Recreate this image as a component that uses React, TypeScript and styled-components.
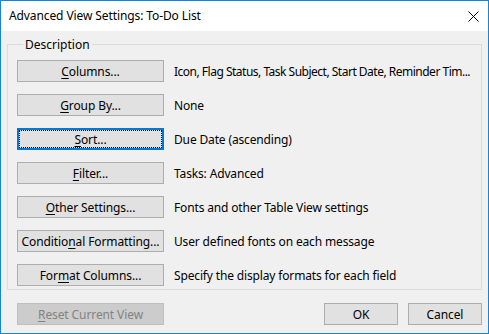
import React from 'react'
import styled, { createGlobalStyle } from 'styled-components'

const GlobalStyle = createGlobalStyle`
  html, body {
    margin: 0;
    padding: 0;
    background: #ffffff;
  }
  * {
    box-sizing: border-box;
  }
`

const font = `"Noto Sans", "Open Sans", sans-serif`

const Window = styled.div`
  width: 489px;
  height: 334px;
  border: 1px solid #1883d7;
  background: #f0f0f0;
  display: flex;
  flex-direction: column;
  font-family: ${font};
  font-size: 12px;
  color: #000;
`

const TitleBar = styled.div`
  height: 30px;
  background: #ffffff;
  display: flex;
  align-items: center;
  justify-content: space-between;
  padding: 0 8px 0 8px;
`

const Title = styled.div`
  font-size: 12px;
  letter-spacing: -0.1px;
  margin-top: -1px;
`

const CloseButton = styled.div`
  width: 20px;
  height: 20px;
  display: flex;
  align-items: center;
  justify-content: center;
  margin-right: -3px;
`

const Body = styled.div`
  flex: 1;
  display: flex;
  flex-direction: column;
  padding: 6px 6px 0 6px;
`

const Group = styled.fieldset`
  margin: 0;
  border: 1px solid #dcdcdc;
  padding: 8px 0 6px 9px;
  height: 253px;
  display: flex;
  flex-direction: column;
  gap: 12px;
`

const Legend = styled.legend`
  padding: 0 2px;
  margin-left: 6px;
  font-size: 12px;
  line-height: 15px;
`

const Row = styled.div`
  display: flex;
  align-items: center;
  gap: 10px;
`

const Button = styled.button<{ $focused?: boolean; $width?: number }>`
  width: ${p => p.$width ?? 147}px;
  height: 22px;
  padding: 0;
  margin: 0;
  flex-shrink: 0;
  font-family: ${font};
  font-size: 12px;
  color: #000;
  background: #e1e1e1;
  border: ${p => (p.$focused ? '2px solid #0078d7' : '1px solid #adadad')};
  position: relative;
  display: flex;
  align-items: center;
  justify-content: center;
  letter-spacing: -0.1px;

  &:disabled {
    background: #cccccc;
    border-color: #bfbfbf;
    color: #838383;
  }

  u {
    text-decoration-thickness: 1px;
    text-underline-offset: 2px;
  }
`

const FocusRing = styled.span`
  position: absolute;
  inset: 0;
  border: 1px dotted #000;
  pointer-events: none;
`

const Value = styled.div<{ $tight?: boolean }>`
  font-size: 12px;
  white-space: nowrap;
  letter-spacing: ${p => (p.$tight ? '-0.5px' : '-0.15px')};
`

const Footer = styled.div`
  display: flex;
  align-items: center;
  padding: 13px 0 0 10px;
`

const Spacer = styled.div`
  flex: 1;
`

const FooterButtons = styled.div`
  display: flex;
  gap: 10px;
`

type Item = { label: React.ReactNode; value: string; focused?: boolean; tight?: boolean }

const items: Item[] = [
  {
    label: <><u>C</u>olumns...</>,
    value: 'Icon, Flag Status, Task Subject, Start Date, Reminder Tim...',
    tight: true,
  },
  { label: <><u>G</u>roup By...</>, value: 'None' },
  { label: <><u>S</u>ort...</>, value: 'Due Date (ascending)', focused: true },
  { label: <><u>F</u>ilter...</>, value: 'Tasks: Advanced' },
  { label: <><u>O</u>ther Settings...</>, value: 'Fonts and other Table View settings' },
  { label: <>Conditio<u>n</u>al Formatting...</>, value: 'User defined fonts on each message' },
  { label: <>For<u>m</u>at Columns...</>, value: 'Specify the display formats for each field' },
]

export default function App() {
  return (
    <>
      <GlobalStyle />
      <Window>
        <TitleBar>
          <Title>Advanced View Settings: To-Do List</Title>
          <CloseButton>
            <svg width="11" height="11" viewBox="0 0 11 11">
              <path d="M0.5 0.5 L10.5 10.5 M10.5 0.5 L0.5 10.5" stroke="#000" strokeWidth="1" />
            </svg>
          </CloseButton>
        </TitleBar>
        <Body>
          <Group>
            <Legend>Description</Legend>
            {items.map((item, i) => (
              <Row key={i}>
                <Button $focused={item.focused}>
                  {item.label}
                  {item.focused && <FocusRing />}
                </Button>
                <Value $tight={item.tight}>{item.value}</Value>
              </Row>
            ))}
          </Group>
          <Footer>
            <Button disabled>
              <span><u>R</u>eset Current View</span>
            </Button>
            <Spacer />
            <FooterButtons>
              <Button $width={74}>OK</Button>
              <Button $width={74}>Cancel</Button>
            </FooterButtons>
          </Footer>
        </Body>
      </Window>
    </>
  )
}
